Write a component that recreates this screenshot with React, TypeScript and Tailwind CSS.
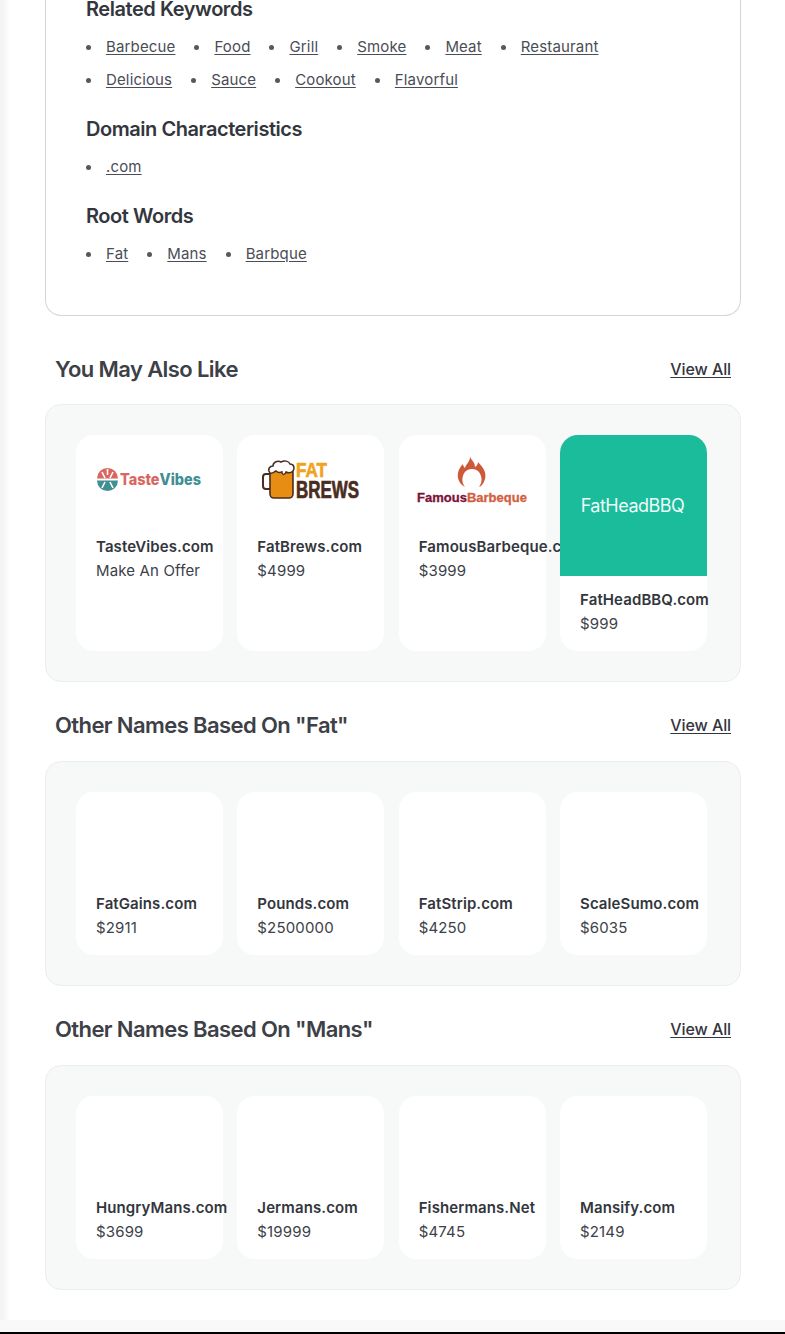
const font = "[font-family:Inter,'Liberation_Sans',sans-serif]";

type Item = { name: string; price: string; logo?: "taste" | "brews" | "famous" | "teal" };

const TasteLogo = () => (
  <svg viewBox="0 0 147 88" className="h-[88px] w-full">
    <path d="M21 43.5a10.5 10.5 0 0 1 21 0z" fill="#d9675f" />
    <path d="M21 45.5a10.5 10.5 0 0 0 21 0z" fill="#3f8f94" />
    <path d="M31.5 34v6M26 37l3 6M37 37l-3 6M26 53l3-6M37 53l-3-6" stroke="#fff" strokeWidth="1.6" />
    <text x="44" y="50" fontFamily="Inter, sans-serif" fontWeight="800" fontSize="15.5" textLength="81" lengthAdjust="spacingAndGlyphs">
      <tspan fill="#d9675f">Taste</tspan>
      <tspan fill="#3f8f94">Vibes</tspan>
    </text>
  </svg>
);

const BrewsLogo = () => (
  <svg viewBox="0 0 147 88" className="h-[88px] w-full">
    <rect x="26" y="39" width="9" height="15" rx="3" fill="#fff" stroke="#4a2c20" strokeWidth="2" />
    <rect x="33" y="34" width="23" height="29" rx="4" fill="#e88d14" stroke="#4a2c20" strokeWidth="1.6" />
    <path d="M33 38c-3-4 0-7 3-7 0-4 5-6 8-4 3-2 8-1 9 2 4 0 5 4 3 7-2 2-5 2-7 1-1 3-3 3-4 1v-1c-3 1-5 0-6-1-2 1-4 3-6 2z" fill="#fff" stroke="#4a2c20" strokeWidth="1.5" />
    <text x="59" y="42" fontFamily="'Liberation Sans', sans-serif" fontWeight="700" fontSize="21" fill="#f0a31f" stroke="#f0a31f" strokeWidth="0.7" textLength="31" lengthAdjust="spacingAndGlyphs">FAT</text>
    <text x="59" y="63" fontFamily="'Liberation Sans', sans-serif" fontWeight="700" fontSize="23" fill="#4a2c20" stroke="#4a2c20" strokeWidth="0.7" textLength="63" lengthAdjust="spacingAndGlyphs">BREWS</text>
  </svg>
);

const FamousLogo = () => (
  <svg viewBox="0 0 147 88" className="h-[88px] w-full">
    <path
      d="M71 20c0 5 5 6 5 12 2-1 3-3 3-5 5 5 9 11 7 17-1 4-3 7-6 8 3-4 3-8 2-11-1-4-4-7-9-7s-8 3-9 7c-1 3-1 7 2 11-4-2-6-5-7-9-1-6 2-11 5-14 0 2 1 3 2 4 1-4 6-7 5-13z"
      fill="#cc5a38"
    />
    <text x="18" y="67" fontFamily="'Liberation Sans', sans-serif" fontWeight="700" fontSize="12" strokeWidth="0.3" textLength="110" lengthAdjust="spacingAndGlyphs">
      <tspan fill="#7c1238" stroke="#7c1238">Famous</tspan>
      <tspan fill="#d2603f" stroke="#d2603f">Barbeque</tspan>
    </text>
  </svg>
);

const Card = ({ item }: { item: Item }) => (
  <div className="relative min-w-0 rounded-[18px] bg-white">
    {item.logo === "teal" ? (
      <div className="flex h-[141px] items-center justify-center rounded-t-[18px] bg-[#1abc9c] pr-[2px] text-[18px] tracking-[-0.5px] text-[#eefbf8]">
        FatHeadBBQ
      </div>
    ) : (
      <div className="h-[88px]">
        {item.logo === "taste" && <TasteLogo />}
        {item.logo === "brews" && <BrewsLogo />}
        {item.logo === "famous" && <FamousLogo />}
      </div>
    )}
    <div className="pt-[12px] pr-0 pb-[15px] pl-[20px] leading-6 whitespace-nowrap">
      <div className="text-[15px] font-semibold tracking-[0.1px] text-[#33363d]">{item.name}</div>
      <div className="text-[15px] tracking-[0.15px] text-[#3d4149]">{item.price}</div>
    </div>
  </div>
);

const Section = ({
  title,
  items,
  className,
  panelGap,
}: {
  title: string;
  items: Item[];
  className: string;
  panelGap: string;
}) => (
  <section className={className}>
    <div className="flex h-[28px] items-center justify-between pr-[10px] pl-[10px]">
      <h2 className="text-[22px] font-semibold tracking-[-0.6px] text-[#3d4046]">{title}</h2>
      <a className="text-[16px] font-medium tracking-[-0.1px] text-[#33363d] underline underline-offset-2">View All</a>
    </div>
    <div className={`${panelGap} grid grid-cols-4 gap-x-[14.4px] rounded-[16px] border border-[#eceeee] bg-[#f7f9f9] pt-[30px] pr-[33px] pb-[30px] pl-[30px]`}>
      {items.map((item) => (
        <Card key={item.name} item={item} />
      ))}
    </div>
  </section>
);

const KeywordList = ({ words }: { words: string[] }) => (
  <ul className="flex flex-wrap gap-x-[19px] gap-y-[9px] text-[15px] leading-6 tracking-[0.15px] text-[#4a4d55]">
    {words.map((w) => (
      <li key={w} className="flex items-center gap-[15px]">
        <span className="size-[5px] rounded-full bg-[#55585f]" />
        <a className="underline underline-offset-2">{w}</a>
      </li>
    ))}
  </ul>
);

const Heading = ({ children, className }: { children: string; className: string }) => (
  <h3 className={`${className} text-[20px] leading-6 font-semibold tracking-[-0.45px] text-[#33363d]`}>{children}</h3>
);

export default function App() {
  return (
    <div className={`${font} h-[1334px] overflow-hidden bg-[linear-gradient(90deg,#f2f2f2,#f7f7f7_5px,#fff_10px)]`}>
      <div className="mt-[-3px] h-[1323px] pr-[44px] pl-[45px]">
        <div className="h-[319px] rounded-b-[16px] border border-t-0 border-[#d4d5d7] pl-[40px]">
          <Heading className="">Related Keywords</Heading>
          <div className="mt-[14px] w-[560px]">
            <KeywordList words={["Barbecue", "Food", "Grill", "Smoke", "Meat", "Restaurant", "Delicious", "Sauce", "Cookout", "Flavorful"]} />
          </div>
          <Heading className="mt-[25px]">Domain Characteristics</Heading>
          <div className="mt-[14px]">
            <KeywordList words={[".com"]} />
          </div>
          <Heading className="mt-[25px]">Root Words</Heading>
          <div className="mt-[14px]">
            <KeywordList words={["Fat", "Mans", "Barbque"]} />
          </div>
        </div>
        <Section
          className="mt-[39px]"
          panelGap="mt-[21px]"
          title="You May Also Like"
          items={[
            { name: "TasteVibes.com", price: "Make An Offer", logo: "taste" },
            { name: "FatBrews.com", price: "$4999", logo: "brews" },
            { name: "FamousBarbeque.com", price: "$3999", logo: "famous" },
            { name: "FatHeadBBQ.com", price: "$999", logo: "teal" },
          ]}
        />
        <Section
          className="mt-[29px]"
          panelGap="mt-[22px]"
          title={'Other Names Based On "Fat"'}
          items={[
            { name: "FatGains.com", price: "$2911" },
            { name: "Pounds.com", price: "$2500000" },
            { name: "FatStrip.com", price: "$4250" },
            { name: "ScaleSumo.com", price: "$6035" },
          ]}
        />
        <Section
          className="mt-[29px]"
          panelGap="mt-[22px]"
          title={'Other Names Based On "Mans"'}
          items={[
            { name: "HungryMans.com", price: "$3699" },
            { name: "Jermans.com", price: "$19999" },
            { name: "Fishermans.Net", price: "$4745" },
            { name: "Mansify.com", price: "$2149" },
          ]}
        />
      </div>
      <div className="h-[12px] bg-[#f9f9f9]" />
      <div className="h-[2px] bg-black" />
    </div>
  );
}
